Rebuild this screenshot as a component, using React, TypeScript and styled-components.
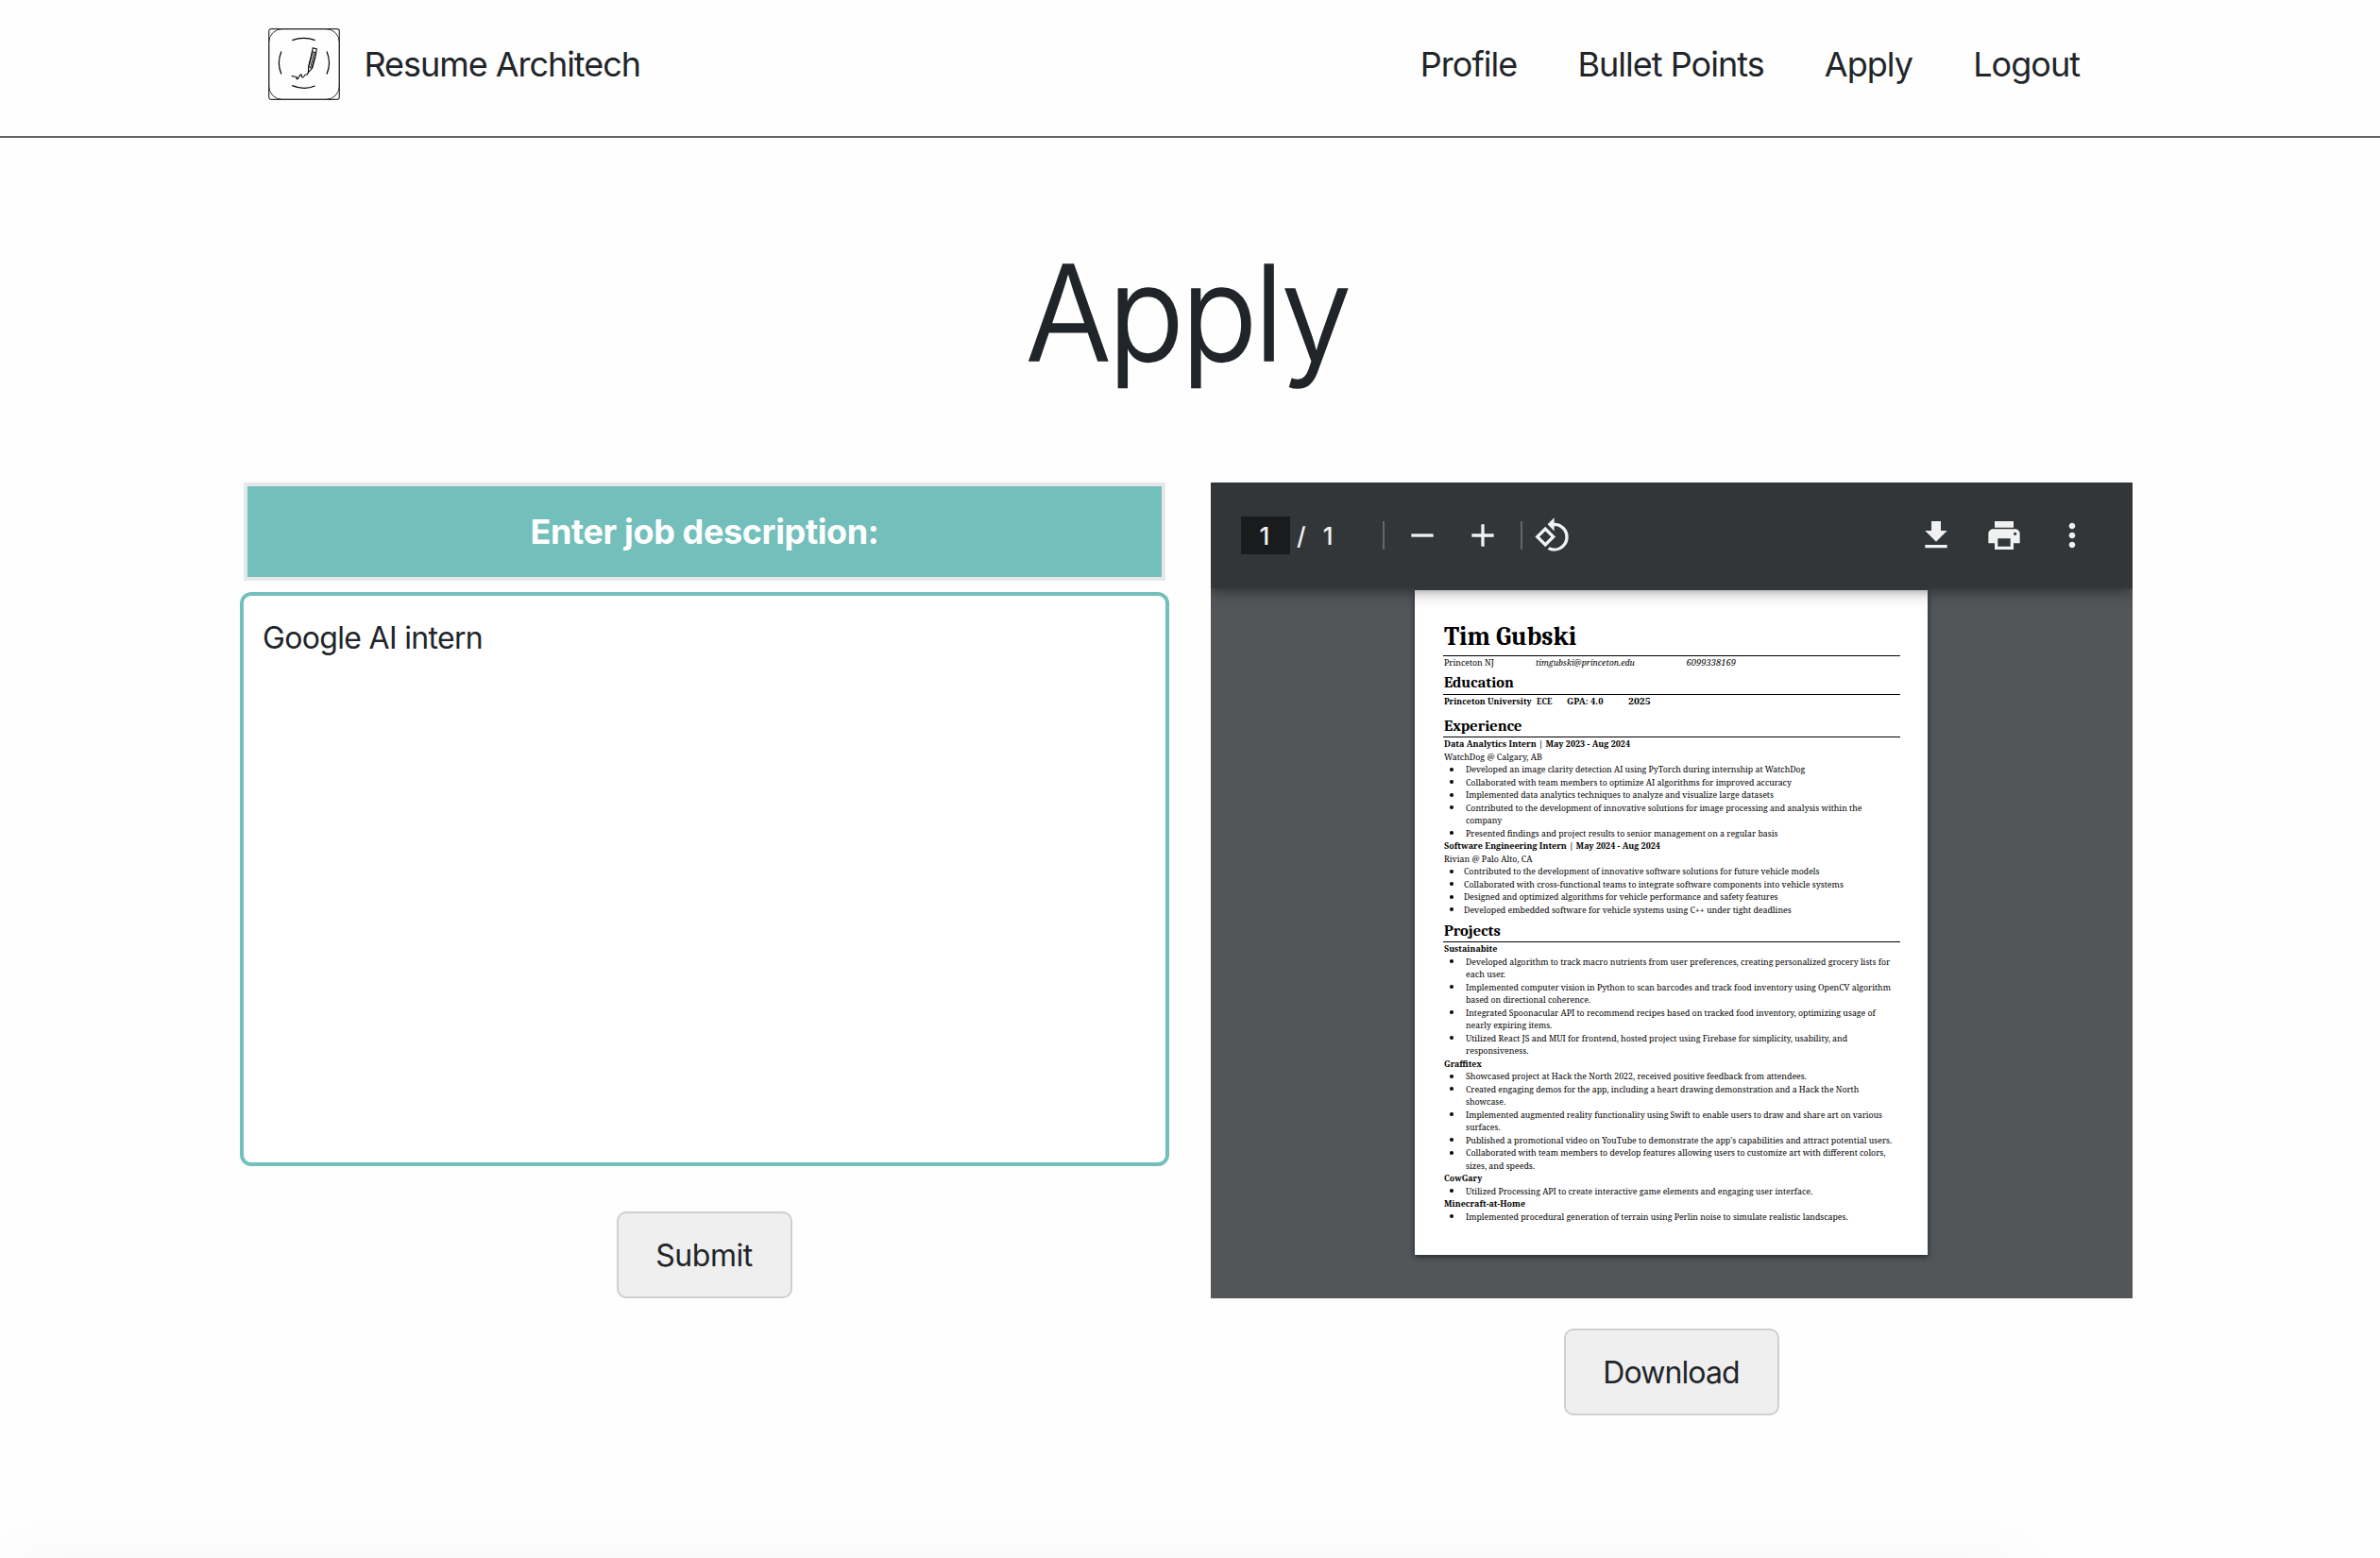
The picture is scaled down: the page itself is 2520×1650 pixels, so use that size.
import React, { useLayoutEffect, useRef, useState } from "react";
import styled, { createGlobalStyle, css } from "styled-components";
import { MdAdd, MdMoreVert, MdPrint, MdRemove, MdRotate90DegreesCcw } from "react-icons/md";

const Global = createGlobalStyle`
  * { box-sizing: border-box; }
  body {
    margin: 0;
    background: #fefefe;
    color: #212529;
    font-family: Inter, "Liberation Sans", sans-serif;
  }
`;

const Screen = styled.div`
  height: 1650px;
  overflow: hidden;
  display: flex;
  flex-direction: column;
`;

const Header = styled.header`
  flex: none;
  height: 146px;
  padding: 0 318px 10px 284px;
  border-bottom: 2px solid #626262;
  display: flex;
  align-items: center;
  justify-content: space-between;
  font-size: 36px;
`;

const Brand = styled.div`
  display: flex;
  align-items: center;
  gap: 25.5px;
  height: 76px;
  margin-top: 2px;
  letter-spacing: -1.05px;
`;

const Logo = styled.svg`
  width: 76px;
  height: 76px;
  fill: none;
  stroke: #000;
`;

const Nav = styled.nav`
  display: flex;
  gap: 64.2px;
  margin-top: 2px;
  letter-spacing: -0.98px;
`;

const NavLink = styled.a`
  color: inherit;
  white-space: nowrap;
`;

const Title = styled.h1`
  margin: 101px 0 96px;
  padding-right: 6px;
  text-align: center;
  font-size: 140px;
  line-height: 168px;
  font-weight: 300;
  letter-spacing: -3.2px;
  -webkit-text-stroke: 1.6px #212529;
  transform: scaleX(0.955);
`;

const Columns = styled.main`
  display: grid;
  grid-template-columns: 984px 976px;
  gap: 44px;
  padding-left: 254px;
  align-items: start;
`;

const Column = styled.section`
  display: flex;
  flex-direction: column;
  align-items: center;
`;

const JobLabel = styled.label`
  width: 976px;
  height: 104px;
  border: 4px solid #e5e7eb;
  background: #73bfbb;
  color: #fff;
  display: flex;
  align-items: center;
  justify-content: center;
  font-size: 36px;
  font-weight: 700;
  letter-spacing: -0.37px;
`;

const JobInput = styled.textarea`
  display: block;
  width: 984px;
  height: 608px;
  margin-top: 12px;
  padding: 21px 20px;
  border: 4px solid #73bfbb;
  border-radius: 12px;
  outline: none;
  resize: none;
  background: #fff;
  color: inherit;
  font: 400 32px/48px Inter, "Liberation Sans", sans-serif;
  letter-spacing: -0.68px;
`;

const Button = styled.button<{ $width: number; $top: number; $track: number }>`
  width: ${(p) => p.$width}px;
  height: 92px;
  margin-top: ${(p) => p.$top}px;
  padding: 2px 1px 0 0;
  border: 2px solid #cfcfcf;
  border-radius: 10px;
  background: #efefef;
  color: inherit;
  font: 400 32px/48px Inter, "Liberation Sans", sans-serif;
  letter-spacing: ${(p) => p.$track}px;
`;

const Viewer = styled.div`
  width: 976px;
  height: 864px;
  background: #525659;
  overflow: hidden;
`;

const Toolbar = styled.div`
  position: relative;
  z-index: 1;
  height: 112px;
  padding: 0 44px 0 32px;
  background: #323639;
  color: #f1f1f1;
  display: flex;
  align-items: center;
  box-shadow: 0 4px 16px rgba(0, 0, 0, 0.3), 0 2px 8px rgba(0, 0, 0, 0.2);
  font-size: 26px;
  font-weight: 500;
  svg { display: block; width: 40px; height: 40px; fill: currentColor; }
`;

const PageNumber = styled.span`
  width: 52px;
  height: 40px;
  padding-right: 2px;
  background: #191b1c;
  display: grid;
  place-items: center;
`;

const PageCount = styled.span`
  display: flex;
  gap: 18px;
  padding-left: 7px;
  width: 98px;
`;

const Divider = styled.i`
  width: 2px;
  height: 30px;
  background: #646769;
`;

const Tool = styled.span<{ $gap: number }>`
  margin-left: ${(p) => p.$gap}px;
`;

const Spacer = styled.span`
  flex: 1;
`;

const Sheet = styled.article`
  width: 543px;
  height: 704px;
  margin: 2px 0 0 216px;
  padding: 0 29px 0 30px;
  background: #fff;
  color: #000;
  box-shadow: 0 2px 6px rgba(0, 0, 0, 0.55);
  font: 9.4px/13.5px "Noto Serif", Cambria, Caladea, "DejaVu Serif Condensed", serif;
`;

const Heading = styled.div<{ $height: number; $bottom: number; $name?: boolean }>`
  height: ${(p) => p.$height}px;
  padding: 0 0 ${(p) => p.$bottom}px 1px;
  border-bottom: 1px solid #000;
  display: flex;
  align-items: flex-end;
  font-family: Cambria, Caladea, "Noto Serif", serif;
  font-weight: 700;
  font-size: ${(p) => (p.$name ? 28 : 16.8)}px;
  line-height: ${(p) => (p.$name ? 34 : 20)}px;
`;

const Row = styled.div<{ $bold?: boolean }>`
  height: 13.5px;
  padding-left: 1px;
  display: flex;
  ${(p) => p.$bold && css`font-weight: 700;`}
`;

const Cell = styled.span<{ $width?: number; $italic?: boolean }>`
  flex: none;
  ${(p) => p.$width && css`width: ${p.$width}px;`}
  ${(p) => p.$italic && css`font-style: italic;`}
`;

const Bullets = styled.ul<{ $indent: number }>`
  list-style: none;
  margin: 0;
  padding: 0 0 0 ${(p) => p.$indent}px;
  --dot: ${(p) => 7 - p.$indent}px;
`;

const Bullet = styled.li`
  position: relative;
  &::before {
    content: "";
    position: absolute;
    left: var(--dot);
    top: 4.5px;
    width: 4px;
    height: 4px;
    border-radius: 50%;
    background: #000;
  }
`;

const Line = styled.div`
  height: 13.5px;
`;

const Run = styled.span`
  display: inline-block;
  white-space: pre;
  transform-origin: 0 50%;
`;

const BottomShade = styled.div`
  flex: none;
  width: 2140px;
  height: 80px;
  margin: auto 0 -80px 6px;
  border-radius: 16px;
  box-shadow: 0 0 72px rgba(0, 0, 0, 0.035);
`;

function Fit({ w, children }: { w: number; children: string }) {
  const ref = useRef<HTMLSpanElement>(null);
  const [scale, setScale] = useState(1);
  useLayoutEffect(() => {
    if (ref.current) setScale(w / ref.current.offsetWidth);
  }, [w]);
  return (
    <Run ref={ref} style={{ transform: `scaleX(${scale})` }}>
      {children}
    </Run>
  );
}

type TextRun = [string, number];
type Entry = { title: TextRun; place?: TextRun; indent: number; bullets: TextRun[][] };

const experience: Entry[] = [
  {
    title: ["Data Analytics Intern | May 2023 - Aug 2024", 197],
    place: ["WatchDog @ Calgary, AB", 104],
    indent: 24,
    bullets: [
      [["Developed an image clarity detection AI using PyTorch during internship at WatchDog", 359.5]],
      [["Collaborated with team members to optimize AI algorithms for improved accuracy", 344.5]],
      [["Implemented data analytics techniques to analyze and visualize large datasets", 325.5]],
      [
        ["Contributed to the development of innovative solutions for image processing and analysis within the", 419],
        ["company", 38],
      ],
      [["Presented findings and project results to senior management on a regular basis", 330.5]],
    ],
  },
  {
    title: ["Software Engineering Intern | May 2024 - Aug 2024", 229],
    place: ["Rivian @ Palo Alto, CA", 93],
    indent: 21.5,
    bullets: [
      [["Contributed to the development of innovative software solutions for future vehicle models", 376.5]],
      [["Collaborated with cross-functional teams to integrate software components into vehicle systems", 402]],
      [["Designed and optimized algorithms for vehicle performance and safety features", 332.5]],
      [["Developed embedded software for vehicle systems using C++ under tight deadlines", 346.5]],
    ],
  },
];

const projects: Entry[] = [
  {
    title: ["Sustainabite", 56],
    indent: 24,
    bullets: [
      [
        ["Developed algorithm to track macro nutrients from user preferences, creating personalized grocery lists for", 449],
        ["each user.", 42],
      ],
      [
        ["Implemented computer vision in Python to scan barcodes and track food inventory using OpenCV algorithm", 450],
        ["based on directional coherence.", 132],
      ],
      [
        ["Integrated Spoonacular API to recommend recipes based on tracked food inventory, optimizing usage of", 434],
        ["nearly expiring items.", 91],
      ],
      [
        ["Utilized React JS and MUI for frontend, hosted project using Firebase for simplicity, usability, and", 404],
        ["responsiveness.", 66],
      ],
    ],
  },
  {
    title: ["Graffitex", 40],
    indent: 24,
    bullets: [
      [["Showcased project at Hack the North 2022, received positive feedback from attendees.", 361]],
      [
        ["Created engaging demos for the app, including a heart drawing demonstration and a Hack the North", 416],
        ["showcase.", 42],
      ],
      [
        ["Implemented augmented reality functionality using Swift to enable users to draw and share art on various", 441.5],
        ["surfaces.", 37],
      ],
      [["Published a promotional video on YouTube to demonstrate the app's capabilities and attract potential users.", 451.5]],
      [
        ["Collaborated with team members to develop features allowing users to customize art with different colors,", 444.5],
        ["sizes, and speeds.", 73],
      ],
    ],
  },
  {
    title: ["CowGary", 40],
    indent: 24,
    bullets: [[["Utilized Processing API to create interactive game elements and engaging user interface.", 367.5]]],
  },
  {
    title: ["Minecraft-at-Home", 86],
    indent: 24,
    bullets: [[["Implemented procedural generation of terrain using Perlin noise to simulate realistic landscapes.", 404.5]]],
  },
];

function Entries({ items }: { items: Entry[] }) {
  return (
    <>
      {items.map((entry) => (
        <React.Fragment key={entry.title[0]}>
          <Row $bold>
            <Fit w={entry.title[1]}>{entry.title[0]}</Fit>
          </Row>
          {entry.place && (
            <Row>
              <Fit w={entry.place[1]}>{entry.place[0]}</Fit>
            </Row>
          )}
          <Bullets $indent={entry.indent}>
            {entry.bullets.map((lines) => (
              <Bullet key={lines[0][0]}>
                {lines.map(([text, w]) => (
                  <Line key={text}>
                    <Fit w={w}>{text}</Fit>
                  </Line>
                ))}
              </Bullet>
            ))}
          </Bullets>
        </React.Fragment>
      ))}
    </>
  );
}

function BrandLogo() {
  return (
    <Logo viewBox="0 0 76 76">
      <rect x="0.7" y="0.7" width="74.6" height="74.6" rx="2.5" stroke="#333" strokeWidth="1.2" />
      <rect x="0.7" y="0.7" width="74.6" height="74.6" rx="14" stroke="#333" strokeWidth="1" />
      <path d="M25.3 12.6Q37.7 8.2 49.6 12.6M25.3 60.6Q37.7 65.8 49.6 61M13.9 24.6Q8.9 36.7 13.9 48.6M62 24.6Q67 36.7 62 48.6" strokeWidth="1.2" />
      <path d="M47.3 20.8l4 1.2-1.6 9-3 11-4.2 4.6.2-6.4 2.9-11.6z" strokeWidth="1.1" />
      <path d="M46.6 24.6l4.6 1.4M48.7 25.5l-4 16M50.3 26l-4.2 16M46.9 25l-3.6 14.6M42.6 40.4l3.6 2.2" strokeWidth="0.9" />
      <path d="M24.7 50.2C27.5 51.8 29.5 51 30.3 51.6C31 52.3 28.8 53.5 30.5 53.7C32.8 53.9 32.5 49 34.7 48.9C36.3 49 34.6 52 36.6 51.9C38.6 51.7 37.9 48.9 39.8 49C41 49.2 41.6 48.8 41.9 47.6L42.6 46.4" strokeWidth="1.1" />
    </Logo>
  );
}

export default function App() {
  return (
    <Screen>
      <Global />
      <Header>
        <Brand>
          <BrandLogo />
          Resume Architech
        </Brand>
        <Nav>
          {["Profile", "Bullet Points", "Apply", "Logout"].map((label) => (
            <NavLink key={label}>{label}</NavLink>
          ))}
        </Nav>
      </Header>
      <Title>Apply</Title>
      <Columns>
        <Column>
          <JobLabel htmlFor="job">Enter job description:</JobLabel>
          <JobInput id="job" defaultValue="Google AI intern" spellCheck={false} />
          <Button $width={186} $top={48} $track={-0.45}>Submit</Button>
        </Column>
        <Column>
          <Viewer>
            <Toolbar>
              <PageNumber>1</PageNumber>
              <PageCount>
                <span>/</span>
                <span>1</span>
              </PageCount>
              <Divider />
              <Tool $gap={20}><MdRemove /></Tool>
              <Tool $gap={24}><MdAdd /></Tool>
              <Tool $gap={20} />
              <Divider />
              <Tool $gap={12}><MdRotate90DegreesCcw /></Tool>
              <Spacer />
              <Tool $gap={0}>
                <svg viewBox="0 0 24 24"><path d="M19 9h-4V3H9v6H5l7 7 7-7zM5 18v2h14v-2H5z" /></svg>
              </Tool>
              <Tool $gap={32}><MdPrint /></Tool>
              <Tool $gap={32}><MdMoreVert /></Tool>
            </Toolbar>
            <Sheet>
              <Heading $height={70} $bottom={3} $name><Fit w={140}>Tim Gubski</Fit></Heading>
              <Row>
                <Cell $width={96.5}><Fit w={52.5}>Princeton NJ</Fit></Cell>
                <Cell $width={160} $italic><Fit w={105}>timgubski@princeton.edu</Fit></Cell>
                <Cell $italic><Fit w={52}>6099338169</Fit></Cell>
              </Row>
              <Heading $height={27.5} $bottom={2.2}><Fit w={74}>Education</Fit></Heading>
              <Row $bold>
                <Cell $width={98}><Fit w={93}>Princeton University</Fit></Cell>
                <Cell $width={32}><Fit w={17}>ECE</Fit></Cell>
                <Cell $width={64.5}><Fit w={38}>GPA: 4.0</Fit></Cell>
                <Cell><Fit w={23.5}>2025</Fit></Cell>
              </Row>
              <Heading $height={31.5} $bottom={1}><Fit w={82.5}>Experience</Fit></Heading>
              <Entries items={experience} />
              <Heading $height={28} $bottom={1}><Fit w={60}>Projects</Fit></Heading>
              <Entries items={projects} />
            </Sheet>
          </Viewer>
          <Button $width={228} $top={32} $track={-0.9}>Download</Button>
        </Column>
      </Columns>
      <BottomShade />
    </Screen>
  );
}
